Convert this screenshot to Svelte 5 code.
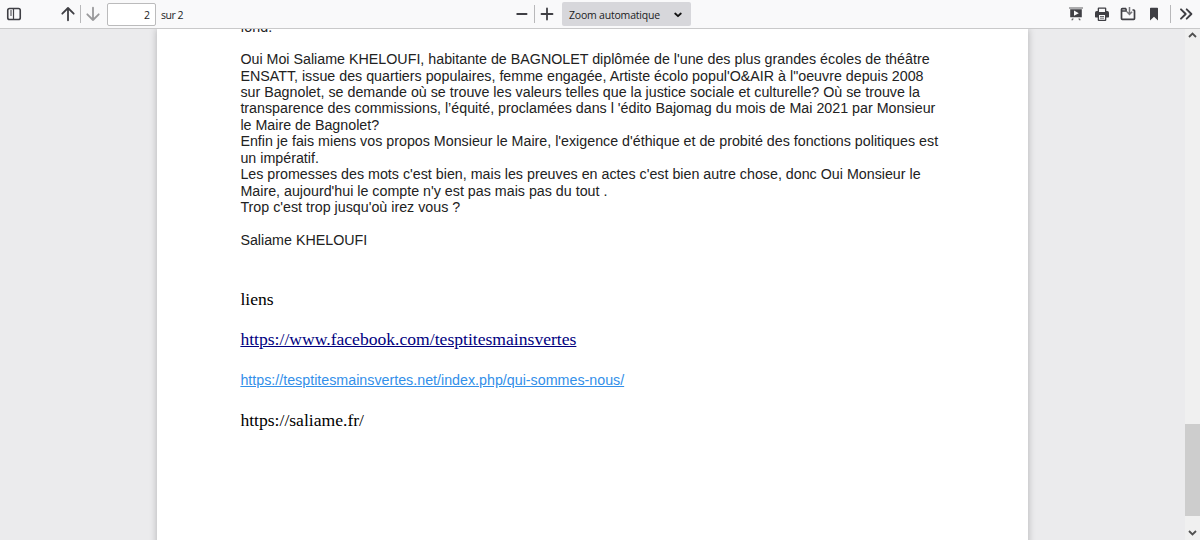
<script>
  let pageNumber = 2;
  const pageCount = 2;

  const lines = [
    'fond.',
    '',
    "Oui Moi Saliame KHELOUFI, habitante de BAGNOLET diplômée de l'une des plus grandes écoles de théâtre",
    "ENSATT, issue des quartiers populaires, femme engagée, Artiste écolo popul'O&AIR à l\"oeuvre depuis 2008",
    'sur Bagnolet, se demande où se trouve les valeurs telles que la justice sociale et culturelle? Où se trouve la',
    "transparence des commissions, l’équité, proclamées dans l 'édito Bajomag du mois de Mai 2021 par Monsieur",
    'le Maire de Bagnolet?',
    "Enfin je fais miens vos propos Monsieur le Maire, l'exigence d'éthique et de probité des fonctions politiques est",
    'un impératif.',
    "Les promesses des mots c'est bien, mais les preuves en actes c'est bien autre chose, donc Oui Monsieur le",
    "Maire, aujourd'hui le compte n'y est pas mais pas du tout .",
    "Trop c'est trop jusqu'où irez vous ?",
    '',
    'Saliame KHELOUFI'
  ];
</script>

<div class="app">
  <header class="toolbar">
    <div class="left">
      <button aria-label="Panneau latéral">
        <svg width="16" height="16" viewBox="0 0 16 16" fill="none" stroke="#3f3f44">
          <rect x="1.75" y="2.5" width="12.5" height="11" rx="1.8" stroke-width="1.6" />
          <path d="M7.5 3v10" stroke-width="1.2" />
          <path d="M4 5h2M4 7h2M4 9h2" stroke-width="1" />
        </svg>
      </button>
      <button class="prev" aria-label="Page précédente">
        <svg width="16" height="16" viewBox="0 0 16 16" fill="none" stroke="#3f3f44" stroke-width="1.8" stroke-linecap="round" stroke-linejoin="round">
          <path d="M8 14.3V2M2.3 7.7L8 2l5.7 5.7" />
        </svg>
      </button>
      <span class="separator"></span>
      <button aria-label="Page suivante">
        <svg width="16" height="16" viewBox="0 0 16 16" fill="none" stroke="#99999b" stroke-width="1.8" stroke-linecap="round" stroke-linejoin="round">
          <path d="M8 1.7V14M2.3 8.3L8 14l5.7-5.7" />
        </svg>
      </button>
      <input class="page-number" type="text" aria-label="Page" bind:value={pageNumber} />
      <span class="page-count">sur {pageCount}</span>
    </div>

    <div class="middle">
      <button aria-label="Zoom arrière">
        <svg width="16" height="16" viewBox="0 0 16 16" fill="none" stroke="#3f3f44" stroke-width="1.8" stroke-linecap="round">
          <path d="M3.2 8h9.4" />
        </svg>
      </button>
      <span class="separator"></span>
      <button aria-label="Zoom avant">
        <svg width="16" height="16" viewBox="0 0 16 16" fill="none" stroke="#3f3f44" stroke-width="1.8" stroke-linecap="round">
          <path d="M2.5 8h11M8 2.5v11" />
        </svg>
      </button>
      <button class="zoom-select">
        <span>Zoom automatique</span>
        <svg width="8" height="6" viewBox="0 0 8 6" fill="none" stroke="#111" stroke-width="1.8" stroke-linecap="round" stroke-linejoin="round">
          <path d="M1.2 1.5L4 4.2l2.8-2.7" />
        </svg>
      </button>
    </div>

    <div class="right">
      <button aria-label="Mode présentation">
        <svg width="16" height="16" viewBox="0 0 16 16" fill="#3f3f44">
          <path d="M1 1.4h14v1.2H1z" fill="#77777b" />
          <path fill-rule="evenodd" d="M2.2 3.2h11.600v8H2.200zM6 4.600v5.200L10.800 7.200z" />
          <path d="M4 12.400h1.700l-.8 1.800H3.300zM10.300 12.400H12l.7 1.800h-1.600z" fill="#66666a" />
        </svg>
      </button>
      <button aria-label="Imprimer">
        <svg width="16" height="16" viewBox="0 0 16 16" fill="#3f3f44">
          <path fill-rule="evenodd" d="M4.700 1.500h6.600a1 1 0 0 1 1 1V5h1A1.700 1.700 0 0 1 15 6.700v4.100a.7.7 0 0 1-.7.7h-2V14a1 1 0 0 1-1 1H4.700a1 1 0 0 1-1-1v-2.500h-2a.7.7 0 0 1-.7-.7V6.700A1.700 1.700 0 0 1 2.700 5h1V2.500a1 1 0 0 1 1-1zM5 2.800V6h6V2.800zM5 9v4.700h6V9z" />
          <path d="M6 10h4v.8H6zM6 11.800h4v.8H6z" />
        </svg>
      </button>
      <button aria-label="Télécharger">
        <svg width="16" height="16" viewBox="0 0 16 16" fill="none">
          <path d="M6.500 4L5.500 2.700H2.300a.8.8 0 0 0-.8.8v9a.8.8 0 0 0 .8.800h11.400a.8.8 0 0 0 .8-.8V4.800a.8.8 0 0 0-.8-.8h-1.200M2 5h5" stroke="#3f3f44" stroke-width="1.700" />
          <path d="M9.500 1v7M6.900 5.800l2.600 2.600 2.600-2.600" stroke="#77777b" stroke-width="1.500" />
        </svg>
      </button>
      <button aria-label="Affichage actuel">
        <svg width="16" height="16" viewBox="0 0 16 16" fill="#3f3f44">
          <path d="M4.700 1.700h6.600a.7.7 0 0 1 .7.7v12.100L8 10.800l-4 3.700V2.400a.7.7 0 0 1 .7-.7z" />
        </svg>
      </button>
      <span class="separator"></span>
      <button aria-label="Outils">
        <svg width="16" height="16" viewBox="0 0 16 16" fill="none" stroke="#3f3f44" stroke-width="1.9" stroke-linecap="round" stroke-linejoin="round">
          <path d="M3 3.300L7.700 8 3 12.700M8.700 3.300L13.400 8l-4.700 4.700" />
        </svg>
      </button>
    </div>
  </header>

  <div class="viewer">
    <main>
      <article class="page">
        <div class="letter">
          {#each lines as line}
            <p>{line}</p>
          {/each}
        </div>
        <section class="links">
          <p>liens</p>
          <p><a class="facebook" href="#facebook">https://www.facebook.com/tesptitesmainsvertes</a></p>
          <p class="small"><a class="site" href="#site">https://tesptitesmainsvertes.net/index.php/qui-sommes-nous/</a></p>
          <p>https://saliame.fr/</p>
        </section>
      </article>
    </main>
    <div class="scrollbar">
      <svg width="15" height="15" viewBox="0 0 15 15" fill="none" stroke="#505050" stroke-width="1.8">
        <path d="M4 8l3.500-3.500L11 8" />
      </svg>
      <div class="thumb"></div>
      <svg width="15" height="15" viewBox="0 0 15 15" fill="none" stroke="#505050" stroke-width="1.8">
        <path d="M4 6l3.500 3.500L11 6" />
      </svg>
    </div>
  </div>
</div>

<style>
  :global(body) {
    overflow: hidden;
  }

  .app {
    display: flex;
    flex-direction: column;
    width: 1200px;
    height: 540px;
    overflow: hidden;
  }

  .toolbar {
    display: flex;
    justify-content: space-between;
    box-sizing: border-box;
    height: 29px;
    flex: none;
    background: #f9f9fa;
    border-bottom: 1px solid #c9c9ca;
    font: 10.5px 'Open Sans', sans-serif;
    letter-spacing: -0.2px;
    color: #1c1c1e;
  }

  .left,
  .middle,
  .right {
    display: flex;
    align-items: center;
  }

  button {
    display: flex;
    padding: 0;
    border: 0;
    background: none;
  }

  .left {
    width: 380px;
    padding-left: 6px;
  }

  .prev {
    margin-left: 37.5px;
  }

  .separator {
    width: 1px;
    height: 18px;
    background: #b8b8ba;
  }

  .left .separator {
    margin: 0 4px 0 4.5px;
  }

  .middle .separator {
    margin: 0 4px;
  }

  .page-number {
    box-sizing: border-box;
    width: 49px;
    height: 23px;
    margin: 0 5px 0 6px;
    padding: 1px 5px 0 0;
    border: 1px solid #bbbbbc;
    border-radius: 2px;
    background: #fff;
    font: inherit;
    color: inherit;
    text-align: right;
  }

  .page-count {
    padding-top: 1px;
    letter-spacing: -0.5px;
  }

  .middle {
    width: 378px;
    margin-right: auto;
    padding-left: 128px;
  }

  .zoom-select {
    align-items: center;
    justify-content: space-between;
    box-sizing: border-box;
    width: 129px;
    height: 24px;
    margin-left: 7px;
    padding: 1px 9px 0 7px;
    border-radius: 2px;
    background: #d7d7db;
    font: inherit;
    letter-spacing: inherit;
    color: inherit;
  }

  .right {
    gap: 10.3px;
    padding-right: 6px;
  }

  .right .separator {
    margin-left: -3px;
    margin-right: -3px;
  }

  .viewer {
    display: flex;
    flex: 1;
    min-height: 0;
    background: #ebebed;
  }

  main {
    flex: 1;
    padding: 0 157px;
    overflow: hidden;
  }

  .page {
    box-sizing: border-box;
    width: 871px;
    height: 600px;
    padding-left: 83.4px;
    background: #fff;
    box-shadow: 0 0 7px rgba(0, 0, 0, 0.25);
    white-space: nowrap;
    overflow: hidden;
  }

  p {
    margin: 0;
  }

  .letter {
    margin-top: -9.8px;
    font: 14.28px/16.45px 'Liberation Sans', Arial, sans-serif;
    color: #222;
  }

  .letter p {
    height: 16.45px;
  }

  .letter p:first-child {
    height: 15.45px;
  }

  .links {
    display: flex;
    flex-direction: column;
    gap: 20.4px;
    margin-top: 40.5px;
    font: 17.6px/20px 'Liberation Serif', 'Times New Roman', serif;
    color: #000;
  }

  .links p {
    height: 20px;
  }

  .facebook {
    color: #000080;
  }

  .links .small {
    font-family: 'Liberation Sans', Arial, sans-serif;
    font-size: 14.28px;
  }

  .site {
    color: #338fe9;
  }

  .scrollbar {
    display: flex;
    flex-direction: column;
    width: 15px;
    background: #f0f0f0;
  }

  .thumb {
    height: 92px;
    margin: 380px 0 9px;
    background: #cdcdcd;
  }
</style>
